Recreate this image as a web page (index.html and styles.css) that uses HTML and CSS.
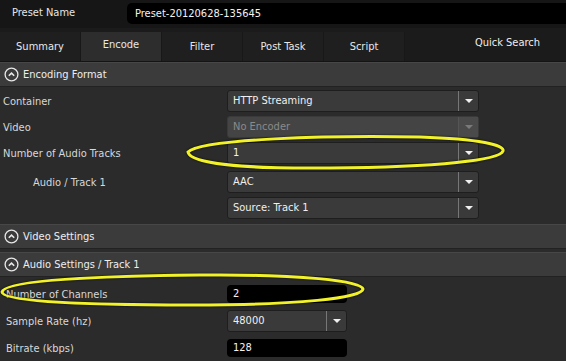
FILE: index.html
```html
<!DOCTYPE html>
<html lang="en">
<head>
    <meta charset="UTF-8">
    <title>Preset - Encode</title>
    <link rel="stylesheet" href="styles.css">
</head>
<body>
<div class="screen">
    <div class="topbar">
        <span class="topbar-label">Preset Name</span>
        <div class="name-field">Preset-20120628-135645</div>
    </div>

    <div class="tabs">
        <span class="tab">Summary</span>
        <span class="tab active">Encode</span>
        <span class="tab">Filter</span>
        <span class="tab">Post Task</span>
        <span class="tab">Script</span>
        <span class="quick-search">Quick Search</span>
    </div>

    <div class="section-head first">
        <svg class="toggle" width="15" height="15" viewBox="0 0 15 15"><circle cx="7.5" cy="7.5" r="6.4" fill="none" stroke="#e8e8e8" stroke-width="1.3"/><path d="M4.8 8.8 L7.5 6.1 L10.2 8.8" fill="none" stroke="#e8e8e8" stroke-width="1.6"/></svg>
        Encoding Format
    </div>
    <div class="form">
        <div class="row">
            <span class="label">Container</span>
            <div class="select"><span class="value">HTTP Streaming</span><span class="arrow"></span></div>
        </div>
        <div class="row">
            <span class="label">Video</span>
            <div class="select disabled"><span class="value">No Encoder</span><span class="arrow"></span></div>
        </div>
        <div class="row">
            <span class="label">Number of Audio Tracks</span>
            <div class="select"><span class="value">1</span><span class="arrow"></span></div>
        </div>
        <div class="row spaced">
            <span class="label indent">Audio / Track 1</span>
            <div class="select"><span class="value">AAC</span><span class="arrow"></span></div>
        </div>
        <div class="row">
            <span class="label"></span>
            <div class="select"><span class="value">Source: Track 1</span><span class="arrow"></span></div>
        </div>
    </div>

    <div class="section-head">
        <svg class="toggle" width="15" height="15" viewBox="0 0 15 15"><circle cx="7.5" cy="7.5" r="6.4" fill="none" stroke="#e8e8e8" stroke-width="1.3"/><path d="M4.8 8.8 L7.5 6.1 L10.2 8.8" fill="none" stroke="#e8e8e8" stroke-width="1.6"/></svg>
        Video Settings
    </div>
    <div class="section-head">
        <svg class="toggle" width="15" height="15" viewBox="0 0 15 15"><circle cx="7.5" cy="7.5" r="6.4" fill="none" stroke="#e8e8e8" stroke-width="1.3"/><path d="M4.8 8.8 L7.5 6.1 L10.2 8.8" fill="none" stroke="#e8e8e8" stroke-width="1.6"/></svg>
        Audio Settings / Track 1
    </div>
    <div class="form audio">
        <div class="row">
            <span class="label wide">Number of Channels</span>
            <div class="input">2</div>
        </div>
        <div class="row">
            <span class="label wide">Sample Rate (hz)</span>
            <div class="select small"><span class="value">48000</span><span class="arrow"></span></div>
        </div>
        <div class="row">
            <span class="label wide">Bitrate (kbps)</span>
            <div class="input">128</div>
        </div>
    </div>

    <!-- hand drawn highlight marks -->
    <svg class="marks" width="566" height="361" viewBox="0 0 566 361">
        <path d="M188 152 C 200 139, 330 135, 420 137 C 480 139, 505 145, 503 151 C 500 160, 440 167, 330 168 C 240 169, 190 163, 188 152 Z"/>
        <path d="M2 292 C 4 280, 100 276, 200 275 C 300 274, 362 281, 363 289 C 362 298, 300 305, 190 305 C 90 305, 2 302, 2 292 Z"/>
    </svg>
</div>
</body>
</html>
```

FILE: styles.css
```css
html, body {
    margin: 0;
    padding: 0;
    background: #2b2b2b;
}

body {
    font-family: "DejaVu Sans Condensed", "Liberation Sans", sans-serif;
    font-size: 11px;
    color: #e4e4e4;
}

.screen {
    position: relative;
    width: 566px;
    height: 361px;
    overflow: hidden;
    background: #2b2b2b;
}

/* top bar */

.topbar {
    display: flex;
    align-items: center;
    height: 28px;
    background: #161616;
}

.topbar-label {
    width: 127px;
    padding-left: 12px;
    box-sizing: border-box;
    color: #e6e6e6;
    margin-top: -3px;
}

.name-field {
    flex: 1;
    height: 21px;
    line-height: 21px;
    margin-top: -2px;
    padding-left: 8px;
    background: #000;
    border-radius: 5px 0 0 5px;
    color: #f2f2f2;
}

/* tabs */

.tabs {
    display: flex;
    align-items: flex-end;
    height: 33px;
    background: #1b1b1b;
    border-bottom: 1px solid #141414;
}

.tab {
    width: 80px;
    height: 29px;
    line-height: 29px;
    text-align: center;
    background: #1f1f1f;
    border-right: 1px solid #181818;
    color: #e8e8e8;
}

.tab.active {
    background: #2d2d2d;
    line-height: 25px;
}

.quick-search {
    flex: 1;
    height: 33px;
    line-height: 29px;
    text-align: right;
    padding-right: 26px;
    color: #eee;
}

/* section headers */

.section-head {
    display: flex;
    align-items: center;
    gap: 4px;
    height: 23px;
    padding-left: 4px;
    background: #3b3b3b;
    border-top: 1px solid #474747;
    border-bottom: 1px solid #222;
    color: #eee;
    margin-top: 3px;
}

.section-head.first {
    margin-top: 0;
}

.toggle {
    flex: none;
}

/* form rows */

.form {
    padding: 3px 0 2px 0;
}

.row {
    display: flex;
    align-items: center;
    height: 22px;
    margin-bottom: 4px;
}

.row:last-child {
    margin-bottom: 0;
}

.row.spaced {
    margin-top: 7px;
}

.label {
    width: 227px;
    flex: none;
    padding-left: 3px;
    box-sizing: border-box;
    color: #d8d8d8;
}

.label.indent {
    padding-left: 33px;
}

.select {
    display: flex;
    width: 252px;
    height: 22px;
    box-sizing: border-box;
    background: #3a3a3a;
    border: 1px solid #1e1e1e;
    border-radius: 3px;
}

.select .value {
    flex: 1;
    line-height: 20px;
    padding-left: 5px;
    color: #f0f0f0;
}

.select .arrow {
    width: 19px;
    position: relative;
    border-left: 1px solid #777;
}

.select .arrow::after {
    content: "";
    position: absolute;
    left: 6px;
    top: 8px;
    border-left: 4px solid transparent;
    border-right: 4px solid transparent;
    border-top: 4px solid #f0f0f0;
}

.select.disabled {
    background: #444;
    border-color: #3a3a3a;
}

.select.disabled .value {
    color: #8a8a8a;
}

.select.disabled .arrow {
    border-left-color: #555;
    background: #4a4a4a;
}

.select.disabled .arrow::after {
    border-top-color: #7a7a7a;
}

.select.small {
    width: 120px;
}

.form.audio {
    padding-top: 6px;
}

.form.audio .row {
    margin-bottom: 5px;
}

.form.audio .label {
    padding-left: 6px;
}

.input {
    width: 120px;
    height: 18px;
    line-height: 18px;
    padding-left: 6px;
    box-sizing: border-box;
    background: #000;
    border-radius: 4px;
    color: #f2f2f2;
}

/* highlight marks */

.marks {
    position: absolute;
    left: 0;
    top: 0;
    pointer-events: none;
}

.marks path {
    fill: none;
    stroke: #f2f22a;
    stroke-width: 3;
    filter: drop-shadow(0 0 1px rgba(0, 0, 0, 0.8));
}
```
